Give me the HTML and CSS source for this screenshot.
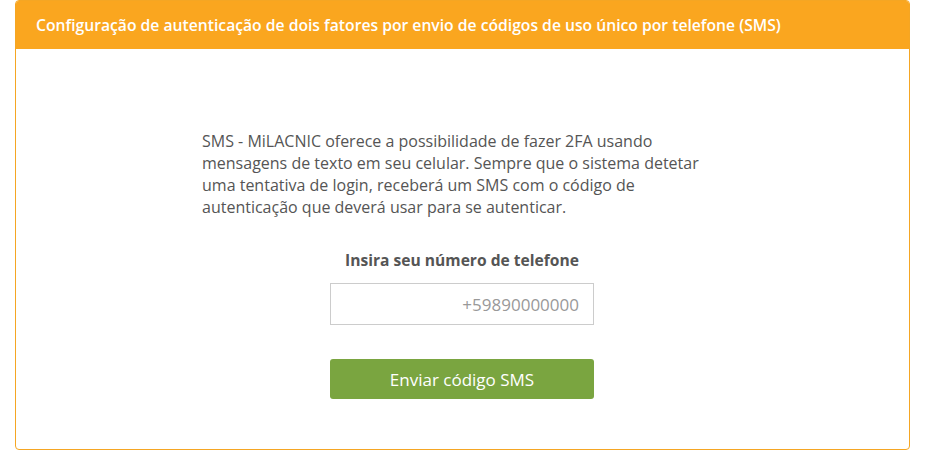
FILE: index.html
```html
<!DOCTYPE html>
<html lang="pt">
<head>
<meta charset="utf-8">
<title>SMS 2FA</title>
<link rel="stylesheet" href="styles.css">
</head>
<body>
<div class="panel">
  <div class="panel-header">Configuração de autenticação de dois fatores por envio de códigos de uso único por telefone (SMS)</div>
  <div class="panel-body">
    <p class="intro">SMS - MiLACNIC oferece a possibilidade de fazer 2FA usando mensagens de texto em seu celular. Sempre que o sistema detetar uma tentativa de login, receberá um SMS com o código de autenticação que deverá usar para se autenticar.</p>
    <form class="form">
      <label class="label" for="phone">Insira seu número de telefone</label>
      <input class="input" id="phone" type="text" placeholder="+59890000000">
      <button class="btn" type="button">Enviar código SMS</button>
    </form>
  </div>
</div>
</body>
</html>
```

FILE: styles.css
```css
* { box-sizing: border-box; }
html, body { margin: 0; padding: 0; background: #fff; }
body {
  font-family: "Open Sans", "Noto Sans", sans-serif;
  color: #555;
}
.panel {
  margin: 0 26px 0 15px;
  height: 450px;
  border: 1px solid #f5a623;
  border-radius: 4px;
  overflow: hidden;
  display: flex;
  flex-direction: column;
}
.panel-header {
  background: #faa61f;
  color: #fff;
  font-size: 15.7px;
  font-weight: 600;
  height: 48px;
  padding: 0 20px;
  display: flex;
  align-items: center;
  flex-shrink: 0;
}
.panel-body {
  flex: 1;
  display: flex;
  flex-direction: column;
  align-items: center;
  padding-top: 81px;
  padding-right: 1px;
}
.intro {
  margin: 0;
  width: 520px;
  font-size: 16px;
  line-height: 22px;
  color: #555;
}
.form {
  display: flex;
  flex-direction: column;
  align-items: center;
  margin-top: 31px;
}
.label {
  font-weight: 700;
  font-size: 15.6px;
  line-height: 22px;
  color: #555;
}
.input {
  margin-top: 12px;
  width: 264px;
  height: 42px;
  border: 1px solid #ccc;
  border-radius: 0;
  padding: 0 14px;
  font-family: inherit;
  font-size: 17px;
  text-align: right;
  color: #555;
  outline: none;
}
.input::placeholder { color: #999; }
.btn {
  margin-top: 34px;
  width: 264px;
  height: 40px;
  border: 0;
  border-radius: 3px;
  background: #7aa540;
  color: #fff;
  font-family: inherit;
  font-size: 17px;
  cursor: pointer;
}
```
